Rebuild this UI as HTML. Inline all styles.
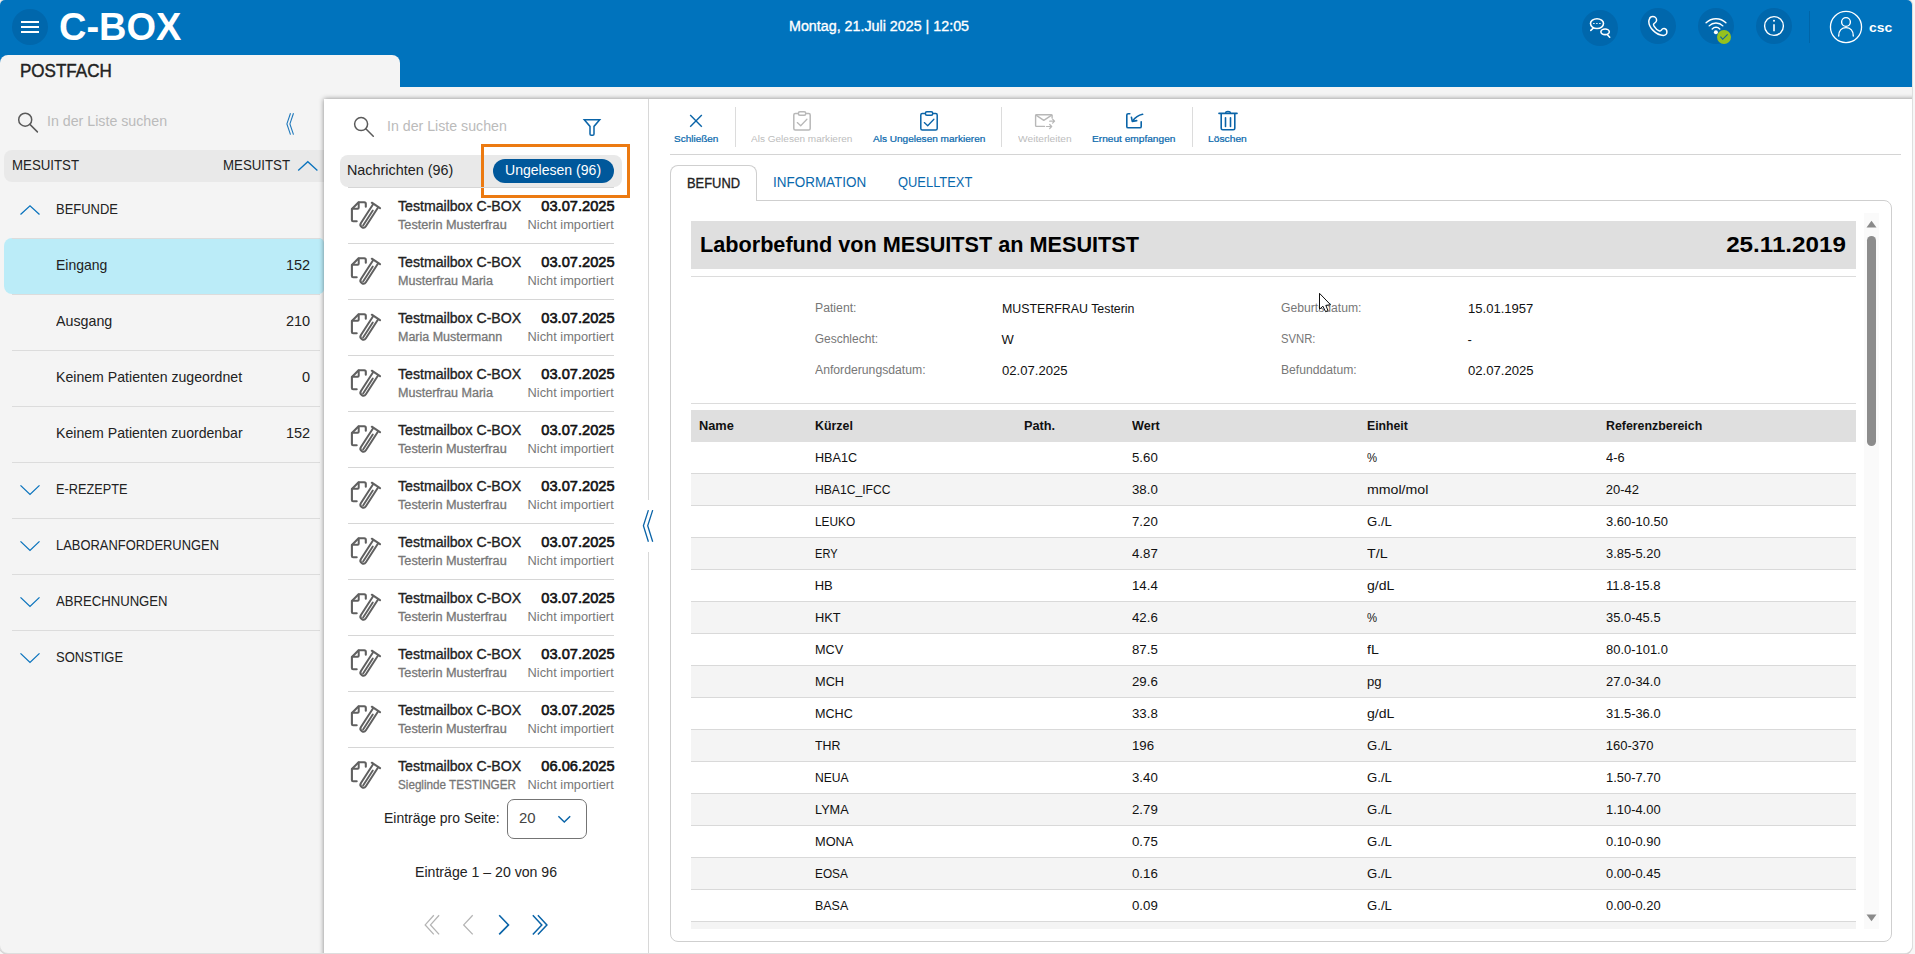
<!DOCTYPE html>
<html lang="de">
<head>
<meta charset="utf-8">
<title>C-BOX Postfach</title>
<style>

html,body{margin:0;padding:0;}
body{width:1915px;height:954px;overflow:hidden;background:#f7f7f7;font-family:"Liberation Sans",sans-serif;color:#222;position:relative;}
.a{position:absolute;}
.t{position:absolute;white-space:nowrap;line-height:1;}
#win{position:absolute;left:0;top:0;width:1912px;height:953px;background:#f4f4f4;border-radius:5px 5px 8px 8px;overflow:hidden;box-shadow:0 0 0 1px #dedede,0 1px 0 1px #d4d4d4;}
#hdr{position:absolute;left:0;top:0;width:1912px;height:87px;background:#0073bd;}
.circ{position:absolute;width:36px;height:36px;border-radius:50%;background:#0067ac;}
.hl{position:absolute;height:1px;background:#dcdcdc;}
.vl{position:absolute;width:1px;background:#dcdcdc;}
svg{position:absolute;overflow:visible;}

</style>
</head>
<body>
<div id="win">
<div id="hdr"></div>
<div class="circ" style="left:12px;top:9px;"></div>
<svg style="left:21px;top:20px" width="18" height="14" viewBox="0 0 18 14"><path d="M0 2H18M0 7H18M0 12H18" stroke="#fff" stroke-width="2" fill="none"/></svg>
<span class="t" style="top:8.24px;font-size:38.5px;left:58.58px;font-weight:700;color:#fff;transform:scaleX(0.9865);transform-origin:left 50%;">C-BOX</span>
<span class="t" style="top:19.25px;font-size:14px;left:788.60px;-webkit-text-stroke:0.34px currentColor;color:#fff;transform:scaleX(1.0205);transform-origin:left 50%;">Montag, 21.Juli 2025 | 12:05</span>
<div class="circ" style="left:1582px;top:10px;"></div>
<div class="circ" style="left:1640px;top:8px;"></div>
<div class="circ" style="left:1698px;top:8px;"></div>
<div class="circ" style="left:1756px;top:8px;"></div>
<div class="vl" style="left:1809px;top:11px;height:32px;background:#0065a8;"></div>
<span class="t" style="top:20.79px;font-size:13.5px;left:1869.23px;font-weight:700;color:#fff;transform:scaleX(1.0302);transform-origin:left 50%;">csc</span>
<div class="a" style="left:0;top:55px;width:400px;height:40px;background:#f4f4f4;border-radius:8px 8px 0 0;"></div>
<span class="t" style="top:62.86px;font-size:17.5px;left:19.52px;-webkit-text-stroke:0.42px currentColor;transform:scaleX(0.9733);transform-origin:left 50%;">POSTFACH</span>
<span class="t" style="top:114.31px;font-size:14.5px;left:47.27px;color:#bbb;transform:scaleX(0.9801);transform-origin:left 50%;">In der Liste suchen</span>
<div class="a" style="left:4px;top:150px;width:330px;height:32px;background:#e9e9e9;border-radius:8px 0 0 8px;"></div>
<span class="t" style="top:158.45px;font-size:14px;left:11.60px;transform:scaleX(0.9473);transform-origin:left 50%;">MESUITST</span>
<span class="t" style="top:158.45px;font-size:14px;left:223.30px;transform:scaleX(0.9473);transform-origin:left 50%;">MESUITST</span>
<div class="a" style="left:4px;top:238px;width:320px;height:56px;background:#bbecf8;border-radius:8px 5px 5px 8px;"></div>
<div class="hl" style="left:12px;top:238px;width:308px;"></div>
<div class="hl" style="left:12px;top:294px;width:308px;"></div>
<div class="hl" style="left:12px;top:350px;width:308px;"></div>
<div class="hl" style="left:12px;top:406px;width:308px;"></div>
<div class="hl" style="left:12px;top:462px;width:308px;"></div>
<div class="hl" style="left:12px;top:518px;width:308px;"></div>
<div class="hl" style="left:12px;top:574px;width:308px;"></div>
<div class="hl" style="left:12px;top:630px;width:308px;"></div>
<span class="t" style="top:202.35px;font-size:14px;left:55.70px;transform:scaleX(0.9259);transform-origin:left 50%;">BEFUNDE</span>
<span class="t" style="top:258.21px;font-size:14.5px;left:55.67px;transform:scaleX(0.9637);transform-origin:left 50%;">Eingang</span>
<span class="t" style="top:258.21px;font-size:14.5px;right:1601.87px;">152</span>
<span class="t" style="top:314.21px;font-size:14.5px;left:55.67px;transform:scaleX(0.9832);transform-origin:left 50%;">Ausgang</span>
<span class="t" style="top:314.21px;font-size:14.5px;right:1601.87px;">210</span>
<span class="t" style="top:370.21px;font-size:14.5px;left:55.67px;transform:scaleX(0.9740);transform-origin:left 50%;">Keinem Patienten zugeordnet</span>
<span class="t" style="top:370.21px;font-size:14.5px;right:1601.87px;">0</span>
<span class="t" style="top:426.21px;font-size:14.5px;left:55.67px;transform:scaleX(0.9725);transform-origin:left 50%;">Keinem Patienten zuordenbar</span>
<span class="t" style="top:426.21px;font-size:14.5px;right:1601.87px;">152</span>
<span class="t" style="top:482.45px;font-size:14px;left:55.70px;transform:scaleX(0.9106);transform-origin:left 50%;">E-REZEPTE</span>
<span class="t" style="top:538.45px;font-size:14px;left:55.70px;transform:scaleX(0.9233);transform-origin:left 50%;">LABORANFORDERUNGEN</span>
<span class="t" style="top:594.45px;font-size:14px;left:55.70px;transform:scaleX(0.9373);transform-origin:left 50%;">ABRECHNUNGEN</span>
<span class="t" style="top:650.45px;font-size:14px;left:55.70px;transform:scaleX(0.9266);transform-origin:left 50%;">SONSTIGE</span>
<div class="a" style="left:324px;top:99px;width:1600px;height:870px;background:#fff;box-shadow:0 0 5px rgba(0,0,0,.45);"></div>
<div class="a" style="left:1903px;top:99px;width:12px;height:860px;background:#fff;"></div>
<div class="vl" style="left:648px;top:99px;height:860px;background:#d8d8d8;"></div>
<div class="a" style="left:640px;top:500px;width:16px;height:52px;background:#fff;"></div>
<span class="t" style="top:119.31px;font-size:14.5px;left:386.97px;color:#bbb;transform:scaleX(0.9776);transform-origin:left 50%;">In der Liste suchen</span>
<div class="a" style="left:340px;top:155px;width:282px;height:32px;background:#e9e9e9;border-radius:8px;"></div>
<div class="a" style="left:493px;top:159px;width:121px;height:24px;background:#00589b;border-radius:12px;"></div>
<span class="t" style="top:163.31px;font-size:14.5px;left:347.47px;transform:scaleX(0.9907);transform-origin:left 50%;">Nachrichten (96)</span>
<span class="t" style="top:163.31px;font-size:14.5px;left:504.97px;color:#fff;transform:scaleX(0.9691);transform-origin:left 50%;">Ungelesen (96)</span>
<div class="a" style="left:481px;top:144px;width:143px;height:48px;border:3px solid #ec7a11;"></div>
<div class="hl" style="left:348px;top:187px;width:266px;background:#d6d6d6;"></div>
<span class="t" style="top:199.45px;font-size:14px;left:397.70px;-webkit-text-stroke:0.34px currentColor;transform:scaleX(1.0081);transform-origin:left 50%;">Testmailbox C-BOX</span>
<span class="t" style="top:199.31px;font-size:14.3px;right:1297.87px;-webkit-text-stroke:0.57px currentColor;color:#111;transform:scaleX(1.0239);transform-origin:right 50%;">03.07.2025</span>
<span class="t" style="top:218.82px;font-size:12px;left:397.80px;-webkit-text-stroke:0.29px currentColor;color:#777;transform:scaleX(1.0584);transform-origin:left 50%;">Testerin Musterfrau</span>
<span class="t" style="top:218.82px;font-size:12px;right:1297.94px;color:#777;transform:scaleX(1.0671);transform-origin:right 50%;">Nicht importiert</span>
<div class="hl" style="left:348px;top:243px;width:266px;background:#d6d6d6;"></div>
<span class="t" style="top:255.45px;font-size:14px;left:397.70px;-webkit-text-stroke:0.34px currentColor;transform:scaleX(1.0081);transform-origin:left 50%;">Testmailbox C-BOX</span>
<span class="t" style="top:255.31px;font-size:14.3px;right:1297.87px;-webkit-text-stroke:0.57px currentColor;color:#111;transform:scaleX(1.0239);transform-origin:right 50%;">03.07.2025</span>
<span class="t" style="top:274.82px;font-size:12px;left:397.80px;-webkit-text-stroke:0.29px currentColor;color:#777;transform:scaleX(1.0463);transform-origin:left 50%;">Musterfrau Maria</span>
<span class="t" style="top:274.82px;font-size:12px;right:1297.94px;color:#777;transform:scaleX(1.0671);transform-origin:right 50%;">Nicht importiert</span>
<div class="hl" style="left:348px;top:299px;width:266px;background:#d6d6d6;"></div>
<span class="t" style="top:311.45px;font-size:14px;left:397.70px;-webkit-text-stroke:0.34px currentColor;transform:scaleX(1.0081);transform-origin:left 50%;">Testmailbox C-BOX</span>
<span class="t" style="top:311.31px;font-size:14.3px;right:1297.87px;-webkit-text-stroke:0.57px currentColor;color:#111;transform:scaleX(1.0239);transform-origin:right 50%;">03.07.2025</span>
<span class="t" style="top:330.82px;font-size:12px;left:397.80px;-webkit-text-stroke:0.29px currentColor;color:#777;transform:scaleX(1.0407);transform-origin:left 50%;">Maria Mustermann</span>
<span class="t" style="top:330.82px;font-size:12px;right:1297.94px;color:#777;transform:scaleX(1.0671);transform-origin:right 50%;">Nicht importiert</span>
<div class="hl" style="left:348px;top:355px;width:266px;background:#d6d6d6;"></div>
<span class="t" style="top:367.45px;font-size:14px;left:397.70px;-webkit-text-stroke:0.34px currentColor;transform:scaleX(1.0081);transform-origin:left 50%;">Testmailbox C-BOX</span>
<span class="t" style="top:367.31px;font-size:14.3px;right:1297.87px;-webkit-text-stroke:0.57px currentColor;color:#111;transform:scaleX(1.0239);transform-origin:right 50%;">03.07.2025</span>
<span class="t" style="top:386.82px;font-size:12px;left:397.80px;-webkit-text-stroke:0.29px currentColor;color:#777;transform:scaleX(1.0463);transform-origin:left 50%;">Musterfrau Maria</span>
<span class="t" style="top:386.82px;font-size:12px;right:1297.94px;color:#777;transform:scaleX(1.0671);transform-origin:right 50%;">Nicht importiert</span>
<div class="hl" style="left:348px;top:411px;width:266px;background:#d6d6d6;"></div>
<span class="t" style="top:423.45px;font-size:14px;left:397.70px;-webkit-text-stroke:0.34px currentColor;transform:scaleX(1.0081);transform-origin:left 50%;">Testmailbox C-BOX</span>
<span class="t" style="top:423.31px;font-size:14.3px;right:1297.87px;-webkit-text-stroke:0.57px currentColor;color:#111;transform:scaleX(1.0239);transform-origin:right 50%;">03.07.2025</span>
<span class="t" style="top:442.82px;font-size:12px;left:397.80px;-webkit-text-stroke:0.29px currentColor;color:#777;transform:scaleX(1.0584);transform-origin:left 50%;">Testerin Musterfrau</span>
<span class="t" style="top:442.82px;font-size:12px;right:1297.94px;color:#777;transform:scaleX(1.0671);transform-origin:right 50%;">Nicht importiert</span>
<div class="hl" style="left:348px;top:467px;width:266px;background:#d6d6d6;"></div>
<span class="t" style="top:479.45px;font-size:14px;left:397.70px;-webkit-text-stroke:0.34px currentColor;transform:scaleX(1.0081);transform-origin:left 50%;">Testmailbox C-BOX</span>
<span class="t" style="top:479.31px;font-size:14.3px;right:1297.87px;-webkit-text-stroke:0.57px currentColor;color:#111;transform:scaleX(1.0239);transform-origin:right 50%;">03.07.2025</span>
<span class="t" style="top:498.82px;font-size:12px;left:397.80px;-webkit-text-stroke:0.29px currentColor;color:#777;transform:scaleX(1.0584);transform-origin:left 50%;">Testerin Musterfrau</span>
<span class="t" style="top:498.82px;font-size:12px;right:1297.94px;color:#777;transform:scaleX(1.0671);transform-origin:right 50%;">Nicht importiert</span>
<div class="hl" style="left:348px;top:523px;width:266px;background:#d6d6d6;"></div>
<span class="t" style="top:535.45px;font-size:14px;left:397.70px;-webkit-text-stroke:0.34px currentColor;transform:scaleX(1.0081);transform-origin:left 50%;">Testmailbox C-BOX</span>
<span class="t" style="top:535.31px;font-size:14.3px;right:1297.87px;-webkit-text-stroke:0.57px currentColor;color:#111;transform:scaleX(1.0239);transform-origin:right 50%;">03.07.2025</span>
<span class="t" style="top:554.82px;font-size:12px;left:397.80px;-webkit-text-stroke:0.29px currentColor;color:#777;transform:scaleX(1.0584);transform-origin:left 50%;">Testerin Musterfrau</span>
<span class="t" style="top:554.82px;font-size:12px;right:1297.94px;color:#777;transform:scaleX(1.0671);transform-origin:right 50%;">Nicht importiert</span>
<div class="hl" style="left:348px;top:579px;width:266px;background:#d6d6d6;"></div>
<span class="t" style="top:591.45px;font-size:14px;left:397.70px;-webkit-text-stroke:0.34px currentColor;transform:scaleX(1.0081);transform-origin:left 50%;">Testmailbox C-BOX</span>
<span class="t" style="top:591.31px;font-size:14.3px;right:1297.87px;-webkit-text-stroke:0.57px currentColor;color:#111;transform:scaleX(1.0239);transform-origin:right 50%;">03.07.2025</span>
<span class="t" style="top:610.82px;font-size:12px;left:397.80px;-webkit-text-stroke:0.29px currentColor;color:#777;transform:scaleX(1.0584);transform-origin:left 50%;">Testerin Musterfrau</span>
<span class="t" style="top:610.82px;font-size:12px;right:1297.94px;color:#777;transform:scaleX(1.0671);transform-origin:right 50%;">Nicht importiert</span>
<div class="hl" style="left:348px;top:635px;width:266px;background:#d6d6d6;"></div>
<span class="t" style="top:647.45px;font-size:14px;left:397.70px;-webkit-text-stroke:0.34px currentColor;transform:scaleX(1.0081);transform-origin:left 50%;">Testmailbox C-BOX</span>
<span class="t" style="top:647.31px;font-size:14.3px;right:1297.87px;-webkit-text-stroke:0.57px currentColor;color:#111;transform:scaleX(1.0239);transform-origin:right 50%;">03.07.2025</span>
<span class="t" style="top:666.82px;font-size:12px;left:397.80px;-webkit-text-stroke:0.29px currentColor;color:#777;transform:scaleX(1.0584);transform-origin:left 50%;">Testerin Musterfrau</span>
<span class="t" style="top:666.82px;font-size:12px;right:1297.94px;color:#777;transform:scaleX(1.0671);transform-origin:right 50%;">Nicht importiert</span>
<div class="hl" style="left:348px;top:691px;width:266px;background:#d6d6d6;"></div>
<span class="t" style="top:703.45px;font-size:14px;left:397.70px;-webkit-text-stroke:0.34px currentColor;transform:scaleX(1.0081);transform-origin:left 50%;">Testmailbox C-BOX</span>
<span class="t" style="top:703.31px;font-size:14.3px;right:1297.87px;-webkit-text-stroke:0.57px currentColor;color:#111;transform:scaleX(1.0239);transform-origin:right 50%;">03.07.2025</span>
<span class="t" style="top:722.82px;font-size:12px;left:397.80px;-webkit-text-stroke:0.29px currentColor;color:#777;transform:scaleX(1.0584);transform-origin:left 50%;">Testerin Musterfrau</span>
<span class="t" style="top:722.82px;font-size:12px;right:1297.94px;color:#777;transform:scaleX(1.0671);transform-origin:right 50%;">Nicht importiert</span>
<div class="hl" style="left:348px;top:747px;width:266px;background:#d6d6d6;"></div>
<span class="t" style="top:759.45px;font-size:14px;left:397.70px;-webkit-text-stroke:0.34px currentColor;transform:scaleX(1.0081);transform-origin:left 50%;">Testmailbox C-BOX</span>
<span class="t" style="top:759.31px;font-size:14.3px;right:1297.87px;-webkit-text-stroke:0.57px currentColor;color:#111;transform:scaleX(1.0239);transform-origin:right 50%;">06.06.2025</span>
<span class="t" style="top:778.82px;font-size:12px;left:397.80px;-webkit-text-stroke:0.29px currentColor;color:#777;transform:scaleX(0.9730);transform-origin:left 50%;">Sieglinde TESTINGER</span>
<span class="t" style="top:778.82px;font-size:12px;right:1297.94px;color:#777;transform:scaleX(1.0671);transform-origin:right 50%;">Nicht importiert</span>
<div class="a" style="left:330px;top:793px;width:316px;height:160px;background:#fff;"></div>
<span class="t" style="top:810.51px;font-size:14.5px;left:383.77px;transform:scaleX(0.9624);transform-origin:left 50%;">Einträge pro Seite:</span>
<div class="a" style="left:507px;top:799px;width:78px;height:38px;border:1px solid #747474;border-radius:7px;"></div>
<span class="t" style="top:810.81px;font-size:14.5px;left:518.77px;color:#444;transform:scaleX(1.0277);transform-origin:left 50%;">20</span>
<span class="t" style="top:864.51px;font-size:14.5px;left:414.77px;transform:scaleX(0.9737);transform-origin:left 50%;">Einträge 1 – 20 von 96</span>
<div class="hl" style="left:670px;top:154px;width:1231px;background:#d4d4d4;"></div>
<div class="vl" style="left:735px;top:107px;height:40px;"></div>
<div class="vl" style="left:1001px;top:107px;height:40px;"></div>
<div class="vl" style="left:1192px;top:107px;height:40px;"></div>
<span class="t" style="top:133.62px;font-size:9.7px;left:673.91px;-webkit-text-stroke:0.23px currentColor;color:#0a69ad;transform:scaleX(1.0309);transform-origin:left 50%;">Schließen</span>
<span class="t" style="top:133.62px;font-size:9.7px;left:751.41px;color:#bdbdbd;transform:scaleX(1.0350);transform-origin:left 50%;">Als Gelesen markieren</span>
<span class="t" style="top:133.62px;font-size:9.7px;left:872.91px;-webkit-text-stroke:0.23px currentColor;color:#0a69ad;transform:scaleX(1.0378);transform-origin:left 50%;">Als Ungelesen markieren</span>
<span class="t" style="top:133.62px;font-size:9.7px;left:1018.31px;color:#bdbdbd;transform:scaleX(1.0538);transform-origin:left 50%;">Weiterleiten</span>
<span class="t" style="top:133.62px;font-size:9.7px;left:1092.12px;-webkit-text-stroke:0.23px currentColor;color:#0a69ad;transform:scaleX(1.0465);transform-origin:left 50%;">Erneut empfangen</span>
<span class="t" style="top:133.62px;font-size:9.7px;left:1208.32px;-webkit-text-stroke:0.23px currentColor;color:#0a69ad;transform:scaleX(1.0597);transform-origin:left 50%;">Löschen</span>
<div class="a" style="left:670px;top:200px;width:1220px;height:740px;border:1px solid #cfcfcf;border-radius:0 8px 8px 8px;"></div>
<div class="a" style="left:670px;top:165px;width:85px;height:35px;border:1px solid #cfcfcf;border-bottom:none;border-radius:8px 8px 0 0;background:#fff;"></div>
<span class="t" style="top:176.45px;font-size:14px;left:686.90px;-webkit-text-stroke:0.34px currentColor;transform:scaleX(0.9216);transform-origin:left 50%;">BEFUND</span>
<span class="t" style="top:175.45px;font-size:14px;left:773.10px;color:#0a69ad;transform:scaleX(0.9617);transform-origin:left 50%;">INFORMATION</span>
<span class="t" style="top:175.45px;font-size:14px;left:898.20px;color:#0a69ad;transform:scaleX(0.9218);transform-origin:left 50%;">QUELLTEXT</span>
<div class="a" style="left:691px;top:221px;width:1165px;height:48px;background:#dfdfdf;"></div>
<span class="t" style="top:234.30px;font-size:22px;left:700.20px;font-weight:700;color:#000;transform:scaleX(0.9839);transform-origin:left 50%;">Laborbefund von MESUITST an MESUITST</span>
<span class="t" style="top:234.30px;font-size:22px;right:65.74px;font-weight:700;color:#000;transform:scaleX(1.0996);transform-origin:right 50%;">25.11.2019</span>
<div class="hl" style="left:691px;top:276px;width:1165px;"></div>
<div class="hl" style="left:691px;top:403px;width:1165px;"></div>
<span class="t" style="top:302.02px;font-size:12px;left:814.70px;color:#777;transform:scaleX(1.0196);transform-origin:left 50%;">Patient:</span>
<span class="t" style="top:301.63px;font-size:13px;left:1001.55px;color:#111;transform:scaleX(0.9518);transform-origin:left 50%;">MUSTERFRAU Testerin</span>
<span class="t" style="top:302.02px;font-size:12px;left:1281.10px;color:#777;transform:scaleX(1.0129);transform-origin:left 50%;">Geburtsdatum:</span>
<span class="t" style="top:301.63px;font-size:13px;left:1467.55px;color:#111;transform:scaleX(1.0046);transform-origin:left 50%;">15.01.1957</span>
<span class="t" style="top:333.02px;font-size:12px;left:814.70px;color:#777;">Geschlecht:</span>
<span class="t" style="top:332.63px;font-size:13px;left:1001.55px;color:#111;">W</span>
<span class="t" style="top:333.02px;font-size:12px;left:1281.10px;color:#777;transform:scaleX(0.9404);transform-origin:left 50%;">SVNR:</span>
<span class="t" style="top:332.63px;font-size:13px;left:1467.55px;color:#111;">-</span>
<span class="t" style="top:364.02px;font-size:12px;left:814.70px;color:#777;transform:scaleX(1.0172);transform-origin:left 50%;">Anforderungsdatum:</span>
<span class="t" style="top:363.63px;font-size:13px;left:1001.55px;color:#111;transform:scaleX(1.0092);transform-origin:left 50%;">02.07.2025</span>
<span class="t" style="top:364.02px;font-size:12px;left:1281.10px;color:#777;transform:scaleX(1.0131);transform-origin:left 50%;">Befunddatum:</span>
<span class="t" style="top:363.63px;font-size:13px;left:1467.55px;color:#111;transform:scaleX(1.0092);transform-origin:left 50%;">02.07.2025</span>
<div class="a" style="left:691px;top:410px;width:1165px;height:32px;background:#dfdfdf;"></div>
<span class="t" style="top:420.18px;font-size:12.5px;left:698.58px;font-weight:700;color:#111;transform:scaleX(1.0232);transform-origin:left 50%;">Name</span>
<span class="t" style="top:420.18px;font-size:12.5px;left:814.67px;font-weight:700;color:#111;transform:scaleX(0.9904);transform-origin:left 50%;">Kürzel</span>
<span class="t" style="top:420.18px;font-size:12.5px;left:1024.38px;font-weight:700;color:#111;transform:scaleX(1.0188);transform-origin:left 50%;">Path.</span>
<span class="t" style="top:420.18px;font-size:12.5px;left:1132.38px;font-weight:700;color:#111;transform:scaleX(1.0063);transform-origin:left 50%;">Wert</span>
<span class="t" style="top:420.18px;font-size:12.5px;left:1367.28px;font-weight:700;color:#111;transform:scaleX(0.9800);transform-origin:left 50%;">Einheit</span>
<span class="t" style="top:420.18px;font-size:12.5px;left:1605.78px;font-weight:700;color:#111;transform:scaleX(0.9894);transform-origin:left 50%;">Referenzbereich</span>
<div class="hl" style="left:691px;top:473px;width:1165px;background:#d9d9d9;"></div>
<span class="t" style="top:451.23px;font-size:13px;left:814.65px;color:#111;transform:scaleX(0.9681);transform-origin:left 50%;">HBA1C</span>
<span class="t" style="top:451.23px;font-size:13px;left:1132.35px;color:#111;transform:scaleX(1.0183);transform-origin:left 50%;">5.60</span>
<span class="t" style="top:451.23px;font-size:13px;left:1367.25px;color:#111;transform:scaleX(0.8714);transform-origin:left 50%;">%</span>
<span class="t" style="top:451.23px;font-size:13px;left:1605.75px;color:#111;transform:scaleX(0.9882);transform-origin:left 50%;">4-6</span>
<div class="a" style="left:691px;top:474px;width:1165px;height:31px;background:#f4f4f4;"></div>
<div class="hl" style="left:691px;top:505px;width:1165px;background:#d9d9d9;"></div>
<span class="t" style="top:483.23px;font-size:13px;left:814.65px;color:#111;transform:scaleX(0.9327);transform-origin:left 50%;">HBA1C_IFCC</span>
<span class="t" style="top:483.23px;font-size:13px;left:1132.35px;color:#111;transform:scaleX(1.0183);transform-origin:left 50%;">38.0</span>
<span class="t" style="top:483.23px;font-size:13px;left:1367.25px;color:#111;transform:scaleX(1.0893);transform-origin:left 50%;">mmol/mol</span>
<span class="t" style="top:483.23px;font-size:13px;left:1605.75px;color:#111;">20-42</span>
<div class="hl" style="left:691px;top:537px;width:1165px;background:#d9d9d9;"></div>
<span class="t" style="top:515.23px;font-size:13px;left:814.65px;color:#111;transform:scaleX(0.9114);transform-origin:left 50%;">LEUKO</span>
<span class="t" style="top:515.23px;font-size:13px;left:1132.35px;color:#111;transform:scaleX(1.0183);transform-origin:left 50%;">7.20</span>
<span class="t" style="top:515.23px;font-size:13px;left:1367.25px;color:#111;transform:scaleX(1.0121);transform-origin:left 50%;">G./L</span>
<span class="t" style="top:515.23px;font-size:13px;left:1605.75px;color:#111;transform:scaleX(0.9952);transform-origin:left 50%;">3.60-10.50</span>
<div class="a" style="left:691px;top:538px;width:1165px;height:31px;background:#f4f4f4;"></div>
<div class="hl" style="left:691px;top:569px;width:1165px;background:#d9d9d9;"></div>
<span class="t" style="top:547.23px;font-size:13px;left:814.65px;color:#111;transform:scaleX(0.8519);transform-origin:left 50%;">ERY</span>
<span class="t" style="top:547.23px;font-size:13px;left:1132.35px;color:#111;transform:scaleX(1.0183);transform-origin:left 50%;">4.87</span>
<span class="t" style="top:547.23px;font-size:13px;left:1367.25px;color:#111;transform:scaleX(1.0946);transform-origin:left 50%;">T/L</span>
<span class="t" style="top:547.23px;font-size:13px;left:1605.75px;color:#111;transform:scaleX(0.9934);transform-origin:left 50%;">3.85-5.20</span>
<div class="hl" style="left:691px;top:601px;width:1165px;background:#d9d9d9;"></div>
<span class="t" style="top:579.23px;font-size:13px;left:814.65px;color:#111;">HB</span>
<span class="t" style="top:579.23px;font-size:13px;left:1132.35px;color:#111;transform:scaleX(1.0183);transform-origin:left 50%;">14.4</span>
<span class="t" style="top:579.23px;font-size:13px;left:1367.25px;color:#111;transform:scaleX(1.0815);transform-origin:left 50%;">g/dL</span>
<span class="t" style="top:579.23px;font-size:13px;left:1605.75px;color:#111;transform:scaleX(1.0112);transform-origin:left 50%;">11.8-15.8</span>
<div class="a" style="left:691px;top:602px;width:1165px;height:31px;background:#f4f4f4;"></div>
<div class="hl" style="left:691px;top:633px;width:1165px;background:#d9d9d9;"></div>
<span class="t" style="top:611.23px;font-size:13px;left:814.65px;color:#111;transform:scaleX(0.9875);transform-origin:left 50%;">HKT</span>
<span class="t" style="top:611.23px;font-size:13px;left:1132.35px;color:#111;transform:scaleX(1.0183);transform-origin:left 50%;">42.6</span>
<span class="t" style="top:611.23px;font-size:13px;left:1367.25px;color:#111;transform:scaleX(0.8714);transform-origin:left 50%;">%</span>
<span class="t" style="top:611.23px;font-size:13px;left:1605.75px;color:#111;transform:scaleX(0.9934);transform-origin:left 50%;">35.0-45.5</span>
<div class="hl" style="left:691px;top:665px;width:1165px;background:#d9d9d9;"></div>
<span class="t" style="top:643.23px;font-size:13px;left:814.65px;color:#111;transform:scaleX(0.9752);transform-origin:left 50%;">MCV</span>
<span class="t" style="top:643.23px;font-size:13px;left:1132.35px;color:#111;transform:scaleX(1.0183);transform-origin:left 50%;">87.5</span>
<span class="t" style="top:643.23px;font-size:13px;left:1367.25px;color:#111;transform:scaleX(1.0859);transform-origin:left 50%;">fL</span>
<span class="t" style="top:643.23px;font-size:13px;left:1605.75px;color:#111;transform:scaleX(0.9952);transform-origin:left 50%;">80.0-101.0</span>
<div class="a" style="left:691px;top:666px;width:1165px;height:31px;background:#f4f4f4;"></div>
<div class="hl" style="left:691px;top:697px;width:1165px;background:#d9d9d9;"></div>
<span class="t" style="top:675.23px;font-size:13px;left:814.65px;color:#111;transform:scaleX(0.9820);transform-origin:left 50%;">MCH</span>
<span class="t" style="top:675.23px;font-size:13px;left:1132.35px;color:#111;transform:scaleX(1.0183);transform-origin:left 50%;">29.6</span>
<span class="t" style="top:675.23px;font-size:13px;left:1367.25px;color:#111;transform:scaleX(1.0073);transform-origin:left 50%;">pg</span>
<span class="t" style="top:675.23px;font-size:13px;left:1605.75px;color:#111;transform:scaleX(0.9934);transform-origin:left 50%;">27.0-34.0</span>
<div class="hl" style="left:691px;top:729px;width:1165px;background:#d9d9d9;"></div>
<span class="t" style="top:707.23px;font-size:13px;left:814.65px;color:#111;transform:scaleX(0.9686);transform-origin:left 50%;">MCHC</span>
<span class="t" style="top:707.23px;font-size:13px;left:1132.35px;color:#111;transform:scaleX(1.0183);transform-origin:left 50%;">33.8</span>
<span class="t" style="top:707.23px;font-size:13px;left:1367.25px;color:#111;transform:scaleX(1.0815);transform-origin:left 50%;">g/dL</span>
<span class="t" style="top:707.23px;font-size:13px;left:1605.75px;color:#111;transform:scaleX(0.9934);transform-origin:left 50%;">31.5-36.0</span>
<div class="a" style="left:691px;top:730px;width:1165px;height:31px;background:#f4f4f4;"></div>
<div class="hl" style="left:691px;top:761px;width:1165px;background:#d9d9d9;"></div>
<span class="t" style="top:739.23px;font-size:13px;left:814.65px;color:#111;transform:scaleX(0.9535);transform-origin:left 50%;">THR</span>
<span class="t" style="top:739.23px;font-size:13px;left:1132.35px;color:#111;transform:scaleX(1.0171);transform-origin:left 50%;">196</span>
<span class="t" style="top:739.23px;font-size:13px;left:1367.25px;color:#111;transform:scaleX(1.0121);transform-origin:left 50%;">G./L</span>
<span class="t" style="top:739.23px;font-size:13px;left:1605.75px;color:#111;">160-370</span>
<div class="hl" style="left:691px;top:793px;width:1165px;background:#d9d9d9;"></div>
<span class="t" style="top:771.23px;font-size:13px;left:814.65px;color:#111;transform:scaleX(0.9322);transform-origin:left 50%;">NEUA</span>
<span class="t" style="top:771.23px;font-size:13px;left:1132.35px;color:#111;transform:scaleX(1.0183);transform-origin:left 50%;">3.40</span>
<span class="t" style="top:771.23px;font-size:13px;left:1367.25px;color:#111;transform:scaleX(1.0121);transform-origin:left 50%;">G./L</span>
<span class="t" style="top:771.23px;font-size:13px;left:1605.75px;color:#111;transform:scaleX(0.9934);transform-origin:left 50%;">1.50-7.70</span>
<div class="a" style="left:691px;top:794px;width:1165px;height:31px;background:#f4f4f4;"></div>
<div class="hl" style="left:691px;top:825px;width:1165px;background:#d9d9d9;"></div>
<span class="t" style="top:803.23px;font-size:13px;left:814.65px;color:#111;transform:scaleX(0.9779);transform-origin:left 50%;">LYMA</span>
<span class="t" style="top:803.23px;font-size:13px;left:1132.35px;color:#111;transform:scaleX(1.0183);transform-origin:left 50%;">2.79</span>
<span class="t" style="top:803.23px;font-size:13px;left:1367.25px;color:#111;transform:scaleX(1.0121);transform-origin:left 50%;">G./L</span>
<span class="t" style="top:803.23px;font-size:13px;left:1605.75px;color:#111;transform:scaleX(0.9934);transform-origin:left 50%;">1.10-4.00</span>
<div class="hl" style="left:691px;top:857px;width:1165px;background:#d9d9d9;"></div>
<span class="t" style="top:835.23px;font-size:13px;left:814.65px;color:#111;transform:scaleX(0.9840);transform-origin:left 50%;">MONA</span>
<span class="t" style="top:835.23px;font-size:13px;left:1132.35px;color:#111;transform:scaleX(1.0183);transform-origin:left 50%;">0.75</span>
<span class="t" style="top:835.23px;font-size:13px;left:1367.25px;color:#111;transform:scaleX(1.0121);transform-origin:left 50%;">G./L</span>
<span class="t" style="top:835.23px;font-size:13px;left:1605.75px;color:#111;transform:scaleX(0.9934);transform-origin:left 50%;">0.10-0.90</span>
<div class="a" style="left:691px;top:858px;width:1165px;height:31px;background:#f4f4f4;"></div>
<div class="hl" style="left:691px;top:889px;width:1165px;background:#d9d9d9;"></div>
<span class="t" style="top:867.23px;font-size:13px;left:814.65px;color:#111;transform:scaleX(0.9100);transform-origin:left 50%;">EOSA</span>
<span class="t" style="top:867.23px;font-size:13px;left:1132.35px;color:#111;transform:scaleX(1.0183);transform-origin:left 50%;">0.16</span>
<span class="t" style="top:867.23px;font-size:13px;left:1367.25px;color:#111;transform:scaleX(1.0121);transform-origin:left 50%;">G./L</span>
<span class="t" style="top:867.23px;font-size:13px;left:1605.75px;color:#111;transform:scaleX(0.9934);transform-origin:left 50%;">0.00-0.45</span>
<div class="hl" style="left:691px;top:921px;width:1165px;background:#d9d9d9;"></div>
<span class="t" style="top:899.23px;font-size:13px;left:814.65px;color:#111;transform:scaleX(0.9564);transform-origin:left 50%;">BASA</span>
<span class="t" style="top:899.23px;font-size:13px;left:1132.35px;color:#111;transform:scaleX(1.0183);transform-origin:left 50%;">0.09</span>
<span class="t" style="top:899.23px;font-size:13px;left:1367.25px;color:#111;transform:scaleX(1.0121);transform-origin:left 50%;">G./L</span>
<span class="t" style="top:899.23px;font-size:13px;left:1605.75px;color:#111;transform:scaleX(0.9934);transform-origin:left 50%;">0.00-0.20</span>
<div class="a" style="left:691px;top:922px;width:1165px;height:7px;background:#f4f4f4;"></div>
<div class="a" style="left:1864px;top:213px;width:15px;height:716px;background:#fafafa;"></div>
<div class="a" style="left:1867px;top:236px;width:9px;height:210px;background:#8c8c8c;border-radius:4.5px;"></div>
<svg style="left:1866px;top:220px" width="11" height="8" viewBox="0 0 11 8"><path d="M0.5 7.5L5.5 0.8L10.5 7.5Z" fill="#8a8a8a"/></svg>
<svg style="left:1866px;top:913.600px" width="11" height="8" viewBox="0 0 11 8"><path d="M0.5 0.5L5.5 7.2L10.5 0.5Z" fill="#8a8a8a"/></svg>
<svg style="left:0;top:0" width="1912" height="953" viewBox="0 0 1912 953"><g stroke="#fff" fill="none" stroke-width="1.4" stroke-linecap="round" stroke-linejoin="round"><ellipse cx="1597" cy="23.600" rx="6.500" ry="4.900" stroke-width="1.600"/><path d="M1593.400 28L1590.800 30.400" stroke-width="1.600"/><ellipse cx="1605.100" cy="31.800" rx="4.200" ry="2.800" stroke-width="1.600"/><path d="M1607.400 34.700L1609.700 37.200" stroke-width="1.600"/><path d="M1593.200 23.500h1.400M1596.200 23.500h1.400M1599.200 23.500h1.400" stroke-width="1.200" stroke-linecap="butt"/><path d="M1649.400 19C1649.800 17.400 1651.400 16.600 1652.800 16.600C1654.800 16.600 1656.600 18.200 1656.600 20.200C1656.600 22 1655 22.800 1653.800 23.800C1653.200 24.300 1653.600 25.400 1654.200 26.300C1655.400 28.200 1657.200 29.900 1659.200 30.900C1660 31.300 1660.600 30.900 1661.200 30.200C1662 29.200 1663 28.400 1664.200 28.600C1665.800 28.900 1666.900 30.600 1666.900 32C1666.900 34 1665.200 35.400 1663.400 35.400C1656 35.200 1648.800 27.600 1648.800 21.400C1648.800 20.500 1649.100 19.700 1649.400 19Z" stroke-width="1.500"/><path d="M1706.09 22.86A13.9 13.9 0 0 1 1725.91 22.86"/><path d="M1709.15 25.87A9.6 9.6 0 0 1 1722.85 25.87"/><path d="M1712.22 28.89A5.3 5.3 0 0 1 1719.78 28.89"/><circle cx="1715.900" cy="32.200" r="2" fill="#fff" stroke="none"/><circle cx="1774" cy="26" r="9.4"/><path d="M1774 24.2V31.2" stroke-width="1.6" stroke-linecap="butt"/><circle cx="1774" cy="20.8" r="1" fill="#fff" stroke="none"/><circle cx="1846" cy="27" r="15.550" stroke-width="1.300"/><circle cx="1846" cy="22" r="4.400"/><path d="M1838.7 36C1838.7 30.300 1842 27.600 1846 27.600C1850 27.600 1853.300 30.300 1853.300 36"/></g><circle cx="1724" cy="37" r="7" fill="#95c11f"/><path d="M1720.400 36.700L1722.700 39.300L1727.600 34.400" stroke="#0a62a6" stroke-width="1.100" fill="none"/><g stroke="#5a5a5a" stroke-width="1.5" fill="none" stroke-linecap="round" transform="translate(0 0)"><circle cx="361.1" cy="124.1" r="6.5"/><path d="M365.800 128.800L373.300 136.300"/></g><g stroke="#5a5a5a" stroke-width="1.5" fill="none" stroke-linecap="round" transform="translate(-335.9 -4.4)"><circle cx="361.1" cy="124.1" r="6.5"/><path d="M365.800 128.800L373.300 136.300"/></g><path d="M584.3 119.700H599.700L594 126.400V134Q594 135.300 592.700 135.300H591.300Q590 135.300 590 134V126.400Z" stroke="#0a64a8" stroke-width="1.5" fill="none"/><polyline points="290.5,113.2 286.9,123.9 290.5,134.6" stroke="#1f78bb" stroke-width="1.1" fill="none"/><polyline points="293.5,113.2 289.9,123.9 293.5,134.6" stroke="#1f78bb" stroke-width="1.1" fill="none"/><polyline points="648.4,510.1 643.4,525.8 648.4,541.7" stroke="#0a64a8" stroke-width="1.3" fill="none"/><polyline points="652.7,510.1 647.7,525.8 652.7,541.7" stroke="#0a64a8" stroke-width="1.3" fill="none"/><polyline points="298.2,170.5 307.8,161.7 317.4,170.5" stroke="#0a73bd" stroke-width="1.3" fill="none"/><polyline points="20.5,214.4 30,205.8 39.5,214.4" stroke="#0a73bd" stroke-width="1.3" fill="none"/><polyline points="20.5,485.4 30,494.4 39.5,485.4" stroke="#0a73bd" stroke-width="1.3" fill="none"/><polyline points="20.5,541.4 30,550.4 39.5,541.4" stroke="#0a73bd" stroke-width="1.3" fill="none"/><polyline points="20.5,597.4 30,606.4 39.5,597.4" stroke="#0a73bd" stroke-width="1.3" fill="none"/><polyline points="20.5,653.4 30,662.4 39.5,653.4" stroke="#0a73bd" stroke-width="1.3" fill="none"/><g transform="translate(350 201)" stroke="#606060" stroke-width="2.100" fill="none" stroke-linejoin="round" stroke-linecap="round"><path d="M15.8 5.800V2.800Q15.800 1.300 14.300 1.300H8.600L1.900 8V19Q1.900 20.300 3.200 20.300H6.700"/><path d="M8.700 1.500V6.700Q8.700 7.700 7.700 7.700H2.300" stroke-width="2"/><g transform="translate(25.900 4.400) rotate(33)"><path d="M-4.900 0H4.900" stroke-width="2.100"/><path d="M-2.950 0.600V22.900A2.950 2.950 0 0 0 2.950 22.900V0.600" stroke-width="2"/><path d="M0.200 6V23.800" stroke-width="1.900"/></g></g><g transform="translate(350 257)" stroke="#606060" stroke-width="2.100" fill="none" stroke-linejoin="round" stroke-linecap="round"><path d="M15.8 5.800V2.800Q15.800 1.300 14.300 1.300H8.600L1.900 8V19Q1.900 20.300 3.200 20.300H6.700"/><path d="M8.700 1.500V6.700Q8.700 7.700 7.700 7.700H2.300" stroke-width="2"/><g transform="translate(25.900 4.400) rotate(33)"><path d="M-4.900 0H4.900" stroke-width="2.100"/><path d="M-2.950 0.600V22.900A2.950 2.950 0 0 0 2.950 22.900V0.600" stroke-width="2"/><path d="M0.200 6V23.800" stroke-width="1.900"/></g></g><g transform="translate(350 313)" stroke="#606060" stroke-width="2.100" fill="none" stroke-linejoin="round" stroke-linecap="round"><path d="M15.8 5.800V2.800Q15.800 1.300 14.300 1.300H8.600L1.900 8V19Q1.900 20.300 3.200 20.300H6.700"/><path d="M8.700 1.500V6.700Q8.700 7.700 7.700 7.700H2.300" stroke-width="2"/><g transform="translate(25.900 4.400) rotate(33)"><path d="M-4.900 0H4.900" stroke-width="2.100"/><path d="M-2.950 0.600V22.900A2.950 2.950 0 0 0 2.950 22.900V0.600" stroke-width="2"/><path d="M0.200 6V23.800" stroke-width="1.900"/></g></g><g transform="translate(350 369)" stroke="#606060" stroke-width="2.100" fill="none" stroke-linejoin="round" stroke-linecap="round"><path d="M15.8 5.800V2.800Q15.800 1.300 14.300 1.300H8.600L1.900 8V19Q1.900 20.300 3.200 20.300H6.700"/><path d="M8.700 1.500V6.700Q8.700 7.700 7.700 7.700H2.300" stroke-width="2"/><g transform="translate(25.900 4.400) rotate(33)"><path d="M-4.900 0H4.900" stroke-width="2.100"/><path d="M-2.950 0.600V22.900A2.950 2.950 0 0 0 2.950 22.900V0.600" stroke-width="2"/><path d="M0.200 6V23.800" stroke-width="1.900"/></g></g><g transform="translate(350 425)" stroke="#606060" stroke-width="2.100" fill="none" stroke-linejoin="round" stroke-linecap="round"><path d="M15.8 5.800V2.800Q15.800 1.300 14.300 1.300H8.600L1.900 8V19Q1.900 20.300 3.200 20.300H6.700"/><path d="M8.700 1.500V6.700Q8.700 7.700 7.700 7.700H2.300" stroke-width="2"/><g transform="translate(25.900 4.400) rotate(33)"><path d="M-4.900 0H4.900" stroke-width="2.100"/><path d="M-2.950 0.600V22.900A2.950 2.950 0 0 0 2.950 22.900V0.600" stroke-width="2"/><path d="M0.200 6V23.800" stroke-width="1.900"/></g></g><g transform="translate(350 481)" stroke="#606060" stroke-width="2.100" fill="none" stroke-linejoin="round" stroke-linecap="round"><path d="M15.8 5.800V2.800Q15.800 1.300 14.300 1.300H8.600L1.900 8V19Q1.900 20.300 3.200 20.300H6.700"/><path d="M8.700 1.500V6.700Q8.700 7.700 7.700 7.700H2.300" stroke-width="2"/><g transform="translate(25.900 4.400) rotate(33)"><path d="M-4.900 0H4.900" stroke-width="2.100"/><path d="M-2.950 0.600V22.900A2.950 2.950 0 0 0 2.950 22.900V0.600" stroke-width="2"/><path d="M0.200 6V23.800" stroke-width="1.900"/></g></g><g transform="translate(350 537)" stroke="#606060" stroke-width="2.100" fill="none" stroke-linejoin="round" stroke-linecap="round"><path d="M15.8 5.800V2.800Q15.800 1.300 14.300 1.300H8.600L1.900 8V19Q1.900 20.300 3.200 20.300H6.700"/><path d="M8.700 1.500V6.700Q8.700 7.700 7.700 7.700H2.300" stroke-width="2"/><g transform="translate(25.900 4.400) rotate(33)"><path d="M-4.900 0H4.900" stroke-width="2.100"/><path d="M-2.950 0.600V22.900A2.950 2.950 0 0 0 2.950 22.900V0.600" stroke-width="2"/><path d="M0.200 6V23.800" stroke-width="1.900"/></g></g><g transform="translate(350 593)" stroke="#606060" stroke-width="2.100" fill="none" stroke-linejoin="round" stroke-linecap="round"><path d="M15.8 5.800V2.800Q15.800 1.300 14.300 1.300H8.600L1.900 8V19Q1.900 20.300 3.200 20.300H6.700"/><path d="M8.700 1.500V6.700Q8.700 7.700 7.700 7.700H2.300" stroke-width="2"/><g transform="translate(25.900 4.400) rotate(33)"><path d="M-4.900 0H4.900" stroke-width="2.100"/><path d="M-2.950 0.600V22.900A2.950 2.950 0 0 0 2.950 22.900V0.600" stroke-width="2"/><path d="M0.200 6V23.800" stroke-width="1.900"/></g></g><g transform="translate(350 649)" stroke="#606060" stroke-width="2.100" fill="none" stroke-linejoin="round" stroke-linecap="round"><path d="M15.8 5.800V2.800Q15.800 1.300 14.300 1.300H8.600L1.900 8V19Q1.900 20.300 3.200 20.300H6.700"/><path d="M8.700 1.500V6.700Q8.700 7.700 7.700 7.700H2.300" stroke-width="2"/><g transform="translate(25.900 4.400) rotate(33)"><path d="M-4.900 0H4.900" stroke-width="2.100"/><path d="M-2.950 0.600V22.900A2.950 2.950 0 0 0 2.950 22.900V0.600" stroke-width="2"/><path d="M0.200 6V23.800" stroke-width="1.900"/></g></g><g transform="translate(350 705)" stroke="#606060" stroke-width="2.100" fill="none" stroke-linejoin="round" stroke-linecap="round"><path d="M15.8 5.800V2.800Q15.800 1.300 14.300 1.300H8.600L1.900 8V19Q1.900 20.300 3.200 20.300H6.700"/><path d="M8.700 1.500V6.700Q8.700 7.700 7.700 7.700H2.300" stroke-width="2"/><g transform="translate(25.900 4.400) rotate(33)"><path d="M-4.900 0H4.900" stroke-width="2.100"/><path d="M-2.950 0.600V22.900A2.950 2.950 0 0 0 2.950 22.900V0.600" stroke-width="2"/><path d="M0.200 6V23.800" stroke-width="1.900"/></g></g><g transform="translate(350 761)" stroke="#606060" stroke-width="2.100" fill="none" stroke-linejoin="round" stroke-linecap="round"><path d="M15.8 5.800V2.800Q15.800 1.300 14.300 1.300H8.600L1.900 8V19Q1.900 20.300 3.200 20.300H6.700"/><path d="M8.700 1.500V6.700Q8.700 7.700 7.700 7.700H2.300" stroke-width="2"/><g transform="translate(25.900 4.400) rotate(33)"><path d="M-4.900 0H4.900" stroke-width="2.100"/><path d="M-2.950 0.600V22.900A2.950 2.950 0 0 0 2.950 22.900V0.600" stroke-width="2"/><path d="M0.200 6V23.800" stroke-width="1.900"/></g></g><polyline points="558.4,816.3 564.3,822 570.2,816.3" stroke="#0a64a8" stroke-width="1.5" fill="none"/><polyline points="433.8,915.3 425.2,924.9 433.8,934.4" stroke="#b4b4b4" stroke-width="1.3" fill="none"/><polyline points="439.1,915.3 430.5,924.9 439.1,934.4" stroke="#b4b4b4" stroke-width="1.3" fill="none"/><polyline points="472.7,915.3 463.7,924.9 472.7,934.4" stroke="#b4b4b4" stroke-width="1.3" fill="none"/><polyline points="499.2,915.3 508.5,924.9 499.2,934.4" stroke="#0a64a8" stroke-width="1.6" fill="none"/><polyline points="532.8,915.3 541.8,924.9 532.8,934.4" stroke="#0a64a8" stroke-width="1.5" fill="none"/><polyline points="537.9,915.3 546.9,924.9 537.9,934.4" stroke="#0a64a8" stroke-width="1.5" fill="none"/><path d="M690.2 115L701.800 126.700M701.800 115L690.200 126.700" stroke="#0a64a8" stroke-width="1.4" fill="none"/><g transform="translate(0 0)" stroke="#b8b8b8" stroke-width="1.5" fill="none" stroke-linejoin="round"><path d="M798.400 113.600H795.300Q793.800 113.600 793.800 115.100V128.500Q793.800 130 795.300 130H808.700Q810.200 130 810.200 128.500V115.100Q810.200 113.600 808.700 113.600H805.700"/><rect x="798.400" y="111.700" width="7.300" height="3.500" rx="1.500"/><path d="M797.300 122.600L800.700 125.700L806.900 119.200" stroke-width="1.300" stroke-linecap="round"/></g><g transform="translate(127 0)" stroke="#0a64a8" stroke-width="1.5" fill="none" stroke-linejoin="round"><path d="M798.400 113.600H795.300Q793.800 113.600 793.800 115.100V128.500Q793.800 130 795.300 130H808.700Q810.200 130 810.200 128.500V115.100Q810.200 113.600 808.700 113.600H805.700"/><rect x="798.400" y="111.700" width="7.300" height="3.500" rx="1.500"/><path d="M797.300 122.600L800.700 125.700L806.900 119.200" stroke-width="1.300" stroke-linecap="round"/></g><g stroke="#b8b8b8" stroke-width="1.400" fill="none" stroke-linejoin="round" stroke-linecap="round"><path d="M1052.100 118V115.600Q1052.100 114.800 1051.300 114.800H1036.400Q1035.600 114.800 1035.600 115.600V125.600Q1035.600 126.400 1036.400 126.400H1044.500"/><path d="M1036 115.200L1043.800 120.400L1051.700 115.200"/><path d="M1049.700 121.200H1054.500M1052.600 119.200L1054.600 121.200L1052.600 123.200M1046.500 126.500H1051.600M1049.700 124.500L1051.700 126.500L1049.700 128.500" stroke-width="1.200"/></g><g stroke="#0a64a8" stroke-width="1.600" fill="none" stroke-linecap="round" stroke-linejoin="round"><path d="M1129.800 113.700H1128.200Q1126.800 113.700 1126.800 115.100V126.400Q1126.800 127.800 1128.200 127.800H1139.800Q1141.200 127.800 1141.200 126.400V121.800"/><path d="M1142.600 114.300Q1136.500 115.500 1132.600 121"/><path d="M1131.400 117.200L1132.300 121.400L1136.700 120.600"/></g><g stroke="#0a64a8" stroke-width="1.600" fill="none" stroke-linecap="round" stroke-linejoin="round"><path d="M1219 113.400H1237"/><path d="M1225.600 113C1225.600 111 1230.400 111 1230.400 113" stroke-width="1.300"/><path d="M1221.200 114V128.300Q1221.200 129.800 1222.700 129.800H1233.300Q1234.800 129.800 1234.800 128.300V114"/><path d="M1225.500 117.700V126.500M1230.500 117.700V126.500"/></g><path d="M1319.500 293.300V309.300L1322.900 306.200L1325.600 311.700L1328 310.600L1325.800 305.400L1330.500 304.700Z" fill="#fff" stroke="#111" stroke-width="1" stroke-linejoin="round"/></svg>
</div>
</body>
</html>
